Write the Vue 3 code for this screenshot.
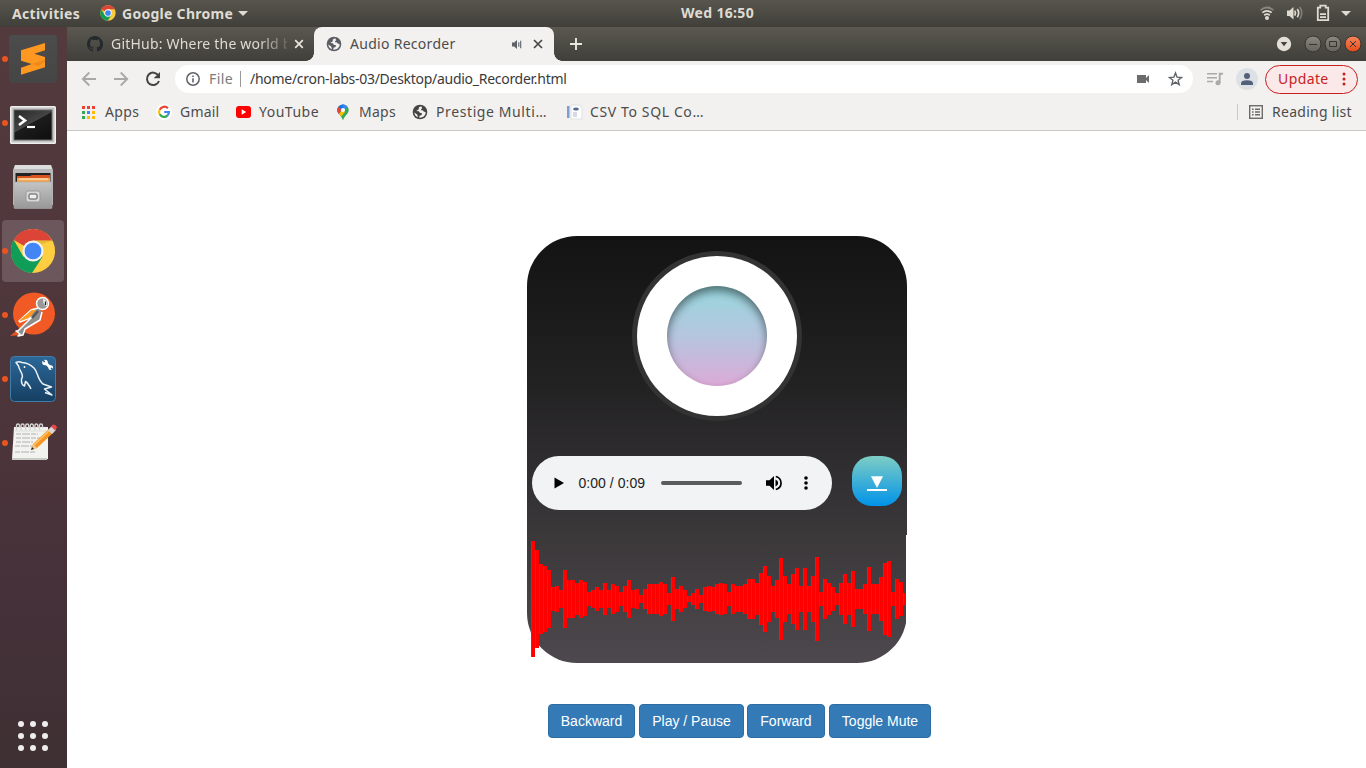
<script setup>
const tops = [33,60,102,108,120,171,168,180,120,150,150,159,150,156,186,180,171,180,159,180,162,168,186,168,150,180,177,195,177,162,162,162,156,162,189,141,177,168,180,198,189,177,195,171,168,171,162,159,162,186,162,168,168,162,147,147,159,129,108,138,168,150,84,138,162,132,114,168,114,168,138,81,186,147,159,171,189,159,132,159,123,177,177,162,111,162,162,141,99,93,186,147,156,189]
const bars = tops.map(t => ((207 - t) * 2) / 3)
const gridColors = ['#ea4335','#ea4335','#ea4335','#34a853','#4285f4','#fbbc05','#34a853','#fbbc05','#fbbc05']
const controls = [
  { label: 'Backward', w: 87 },
  { label: 'Play / Pause', w: 105 },
  { label: 'Forward', w: 78 },
  { label: 'Toggle Mute', w: 102 }
]
</script>

<template>
  <div class="desktop">
    <header class="topbar">
      <span class="activities">Activities</span>
      <svg class="tb-chrome" width="16" height="16" viewBox="0 0 48 48"><circle cx="24" cy="24" r="23" fill="#fbc93d"/><path d="M24 24 4 12.5A23 23 0 0 1 44 12.5H24Z" fill="#db4437"/><path d="M4 12.5A23 23 0 0 0 23 47L34 30 24 24 14 30Z" fill="#0f9d58"/><circle cx="24" cy="24" r="11" fill="#fff"/><circle cx="24" cy="24" r="8.5" fill="#4285f4"/></svg>
      <span class="appname">Google Chrome</span>
      <i class="caret"></i>
      <span class="clock">Wed 16:50</span>
      <div class="tray">
        <svg width="106" height="27" viewBox="0 0 106 27">
          <g fill="none" stroke="#dfdbd2" stroke-width="1.7">
            <path d="M.5 10.200q6.500-5.400 13 0" opacity=".4"/><path d="M2.300 12.700q4.700-3.700 9.400 0"/><path d="M4.200 15.200q2.800-2 5.600 0"/>
            <path d="M34.800 10.600q1.400 2.400 0 5M37.300 9q2.700 4 0 8.300"/><path d="M39.800 7q4 6 0 12.400" opacity=".35"/>
          </g>
          <circle cx="7" cy="18" r="2" fill="#dfdbd2"/>
          <path d="M27 10.500h2.500l4-3.500v12.500l-4-3.500H27z" fill="#dfdbd2"/>
          <path d="M57.800 7.700h2.500v-2h5.400v2h2.500v12.500H57.800zM60 14.200h6M60 17.200h6" fill="none" stroke="#dfdbd2" stroke-width="1.800"/>
          <path d="M81 11h10l-5 5z" fill="#dfdbd2"/>
        </svg>
      </div>
    </header>

    <div class="body">
      <aside class="dock">
        <div class="slot s1"><i class="dot"></i>
          <svg width="48" height="48" viewBox="0 0 48 48"><defs><linearGradient id="sb" x2="0" y2="1"><stop stop-color="#4c4c4c"/><stop offset="1" stop-color="#454545"/></linearGradient></defs><rect width="48" height="48" rx="3.500" fill="url(#sb)"/><path d="M12 15.300 36 8v7.200L25.300 18.800 36 22v10.300L12 39.700v-7L22.700 29 12 25.700z" fill="#ff9820"/><path d="m22.700 29 13.300-4.500v2l-6 4.500z" fill="#ef8a1a"/></svg>
        </div>
        <div class="slot s2"><i class="dot"></i>
          <svg width="46" height="38" viewBox="0 0 46 38"><defs><linearGradient id="tm" x2="0.700" y2="1"><stop stop-color="#282828"/><stop offset=".5" stop-color="#444"/><stop offset=".52" stop-color="#1c1c1c"/><stop offset="1" stop-color="#111"/></linearGradient></defs><rect width="46" height="38" rx="1.500" fill="#efefef"/><rect x="1.500" y="1.500" width="43" height="35" fill="#c4c4c4"/><rect x="4" y="4" width="38" height="30" fill="url(#tm)" stroke="#666"/><path d="m9 10 6 4.500-6 4.500" fill="none" stroke="#fff" stroke-width="2.600"/><path d="M17 21h8" stroke="#fff" stroke-width="2.200"/></svg>
        </div>
        <div class="slot s3">
          <svg width="42" height="44" viewBox="0 0 42 44"><defs><linearGradient id="fc" x2="0" y2="1"><stop stop-color="#c4c4c4"/><stop offset="1" stop-color="#989898"/></linearGradient></defs><path d="M3 0h36l2 5v35H1V5z" fill="#b9b9b9"/><path d="M3 0h36l1 4H2z" fill="#ddd"/><rect x="3.500" y="8" width="35" height="10" fill="#222"/><path d="M5 11h13l2-1h18v8H5z" fill="#d9541c"/><path d="M5 13h33v5H5z" fill="#f4a750"/><path d="M7 14h29" stroke="#fff1dc"/><rect x="2" y="17" width="38" height="26.500" rx="1" fill="url(#fc)" stroke="#aaa" stroke-width=".6"/><rect x="14" y="26" width="14" height="11" rx="2" fill="#d7d7d7" stroke="#9b9b9b"/><rect x="17" y="29" width="8" height="5" rx="1" fill="#eee" stroke="#555"/></svg>
        </div>
        <div class="slot s4"><i class="dot"></i>
          <svg width="46" height="46" viewBox="0 0 48 48"><circle cx="24" cy="24" r="23" fill="#ffcd40"/><path d="M24 24 4 12.500A23 23 0 0 1 44 13H24Z" fill="#db4437"/><path d="M4 12.500A23 23 0 0 0 23 47L34 30 24 24 14 30Z" fill="#0f9d58"/><path d="M24 13h20l-11 4z" fill="#c89a25" opacity=".4"/><circle cx="24" cy="24" r="11" fill="#f1f1f1"/><circle cx="24" cy="24" r="8.700" fill="#4285f4"/></svg>
        </div>
        <div class="slot s5"><i class="dot"></i>
          <svg width="48" height="48" viewBox="0 0 48 48"><circle cx="25" cy="22.500" r="21" fill="#f15a24"/><path d="M1 45 13 35l-1 9z" fill="#e95420"/><path d="M29 17 22 19 10 30l1 1 12-5-14 14-2 0 4 3-2 2 5-1 2-6 15-9 2-8" fill="#8e8e8e" stroke="#fff" stroke-width="1.500" stroke-linejoin="round"/><path d="m23 19-12 10 0 1 9-3 7-8" fill="#ff9a20"/><path d="m29 20-6 7" stroke="#555" stroke-width="2.500"/><circle cx="33.500" cy="12.500" r="6" fill="#999" stroke="#fff" stroke-width="1.500"/><path d="M34 8q5 1 4 7-4 0-4-7" fill="#eee"/><path d="M36.500 10.500v3.500" stroke="#222" stroke-width="1.300"/></svg>
        </div>
        <div class="slot s6"><i class="dot"></i>
          <svg width="46" height="46" viewBox="0 0 46 46"><defs><linearGradient id="my" x2="0" y2="1"><stop stop-color="#2c6899"/><stop offset="1" stop-color="#163f62"/></linearGradient></defs><rect x=".5" y=".5" width="45" height="45" rx="4" fill="url(#my)" stroke="#407da9"/><path d="M21 33Q18 27 15.500 25.500L14.500 30Q11 29 11.500 23C15 19 9 15 8.500 10L6 6.500Q9 5 12 6.500 19 7 24 12C28 16 27 23 33 28L41.500 31 34.500 33 42 39 35 36.500" fill="none" stroke="#e9f1f7" stroke-width="1.500" stroke-linejoin="round"/><circle cx="14.500" cy="11" r=".9" fill="#fff"/><path d="m34.500 6 6.500 6" stroke="#fff" stroke-width="3"/><circle cx="35" cy="6.500" r="2.800" fill="#fff"/><circle cx="40.700" cy="11.700" r="2.400" fill="#fff"/><path d="m32.500 3.500 2.200 2.500M43 14l-2-2" stroke="#2a6391" stroke-width="1.600"/></svg>
        </div>
        <div class="slot s7"><i class="dot"></i>
          <svg width="48" height="40" viewBox="0 0 48 40"><path d="M4 5h34v32H2z" fill="#f2f2ef"/><path d="M2 36h35v2H2z" fill="#c9c9c5"/><path d="M5 9h32" stroke="#ddd"/><path d="M6.500 8V3.500a1.500 1.500 0 0 1 3 0V6m1.600 2V3.500a1.500 1.500 0 0 1 3 0V6m1.600 2V3.500a1.500 1.500 0 0 1 3 0V6m1.600 2V3.500a1.500 1.500 0 0 1 3 0V6m1.600 2V3.500a1.500 1.500 0 0 1 3 0V6m1.600 2V3.500a1.500 1.500 0 0 1 3 0V6" fill="none" stroke="#d4d4d4" stroke-width="1.400"/><path d="M6 12h22M6 16h24M6 20h17M5 24h19M5 30h20" stroke="#a9a9a9" stroke-width=".9" stroke-dasharray="5 1 8 1"/><path d="m21 28 2-6L40 6l4 4-17 16z" fill="#f7971f"/><path d="m24 23 17-16" stroke="#ffc36d" stroke-width="1.500"/><path d="m38 8 4-4 4 4-4 4z" fill="#d8d8d8"/><path d="m41 4.500 2-2q3 0 4 3l-2 3z" fill="#e8474c"/><path d="m21 28 2-6 4 4z" fill="#efc794"/><path d="m21 28 1-3 2 2z" fill="#222"/></svg>
        </div>
        <div class="apps"><i v-for="n in 9" :key="n"></i></div>
      </aside>

      <section class="window">
        <div class="tabs">
          <div class="tab idle">
            <svg width="16" height="16" viewBox="0 0 16 16"><path fill="#24292e" d="M8 0C3.580 0 0 3.580 0 8c0 3.540 2.290 6.530 5.470 7.590.4.070.55-.17.55-.38v-1.490c-2.010.37-2.530-.49-2.690-.94-.09-.23-.48-.94-.82-1.130-.28-.15-.68-.52-.01-.53.63-.01 1.080.58 1.230.82.72 1.210 1.870.87 2.330.66.070-.52.280-.87.510-1.070-1.780-.2-3.640-.89-3.640-3.950 0-.87.310-1.590.82-2.150-.08-.2-.36-1.020.08-2.120 0 0 .67-.21 2.200.82a7.600 7.600 0 0 1 4 0c1.530-1.040 2.200-.82 2.200-.82.44 1.100.16 1.920.08 2.120.51.560.82 1.270.82 2.150 0 3.070-1.870 3.750-3.650 3.950.29.250.54.730.54 1.480v2.200c0 .21.150.46.550.38A8 8 0 0 0 8 0z"/></svg>
            <span class="tab-title t-github">GitHub: Where the world b</span>
            <svg class="close" width="10" height="10" viewBox="0 0 10 10"><path d="m1.200 1.200 7.600 7.600m0-7.600L1.200 8.800" stroke="#e8e6e0" stroke-width="1.700"/></svg>
          </div>
          <div class="tab active">
            <svg width="16" height="16" viewBox="0 0 16 16"><circle cx="8" cy="8" r="7.300" fill="#5a5d62"/><path d="M9.200 2.200 7 3.300 6.600 5.600 4.200 7 6.800 7.300 7.800 8.800 10 9.200 9.600 11 7.600 11.700 7.200 13.700C11 14 13.600 11.600 13.700 8.300L11.800 7.600 10.600 6.200 9 6.300 9.200 5 10.300 4.200zM2.300 8.500 5.200 10.400 6 13.200C3.800 12.500 2.400 10.700 2.300 8.500z" fill="#f2f1f0"/></svg>
            <span class="tab-title t-audio">Audio Recorder</span>
            <svg class="snd" width="11" height="11" viewBox="0 0 11 11"><path d="M0 3.500h2.200L5 1v9L2.200 7.500H0z" fill="#5f6368"/><path d="M6.800 3.200v4.600M8.700 1.700v7.600" stroke="#5f6368" stroke-width="1.100"/></svg>
            <svg class="close2" width="10" height="10" viewBox="0 0 10 10"><path d="m1 1 8 8m0-8L1 9" stroke="#474747" stroke-width="1.700"/></svg>
          </div>
          <svg class="plus" width="12" height="12" viewBox="0 0 12 12"><path d="M6 0v12M0 6h12" stroke="#e8e6e0" stroke-width="1.900"/></svg>
          <svg class="wm" width="92" height="34" viewBox="0 0 92 34">
            <defs><linearGradient id="wb" x2="0" y2="1"><stop stop-color="#8a8880"/><stop offset="1" stop-color="#64625b"/></linearGradient><linearGradient id="wc" x2="0" y2="1"><stop stop-color="#f5875f"/><stop offset="1" stop-color="#e34b17"/></linearGradient></defs>
            <circle cx="10" cy="17" r="7.200" fill="#e4e0d8"/><path d="M6.700 15h6.600L10 19.200z" fill="#45433e"/>
            <g stroke="#35342f"><circle cx="39" cy="17" r="8" fill="url(#wb)"/><circle cx="59" cy="17" r="8" fill="url(#wb)"/><circle cx="79" cy="17" r="8" fill="url(#wc)"/><path d="M35 17.500h8M55.500 14.500h7v5h-7zM76 14l6 6m0-6-6 6" fill="none"/></g>
          </svg>
        </div>

        <div class="toolbar">
          <svg class="nav" width="78" height="36" viewBox="0 0 78 36"><path d="M29 18H16M22.300 11.500 15.800 18l6.500 6.500M47 18h13M53.700 11.500l6.500 6.500-6.500 6.500" fill="none" stroke="#a9a8a7" stroke-width="1.800"/></svg>
          <svg class="reload" width="16" height="16" viewBox="0 0 16 16"><path d="M13.300 4.300A6.200 6.200 0 1 0 14 10" fill="none" stroke="#444" stroke-width="2"/><path d="M15 1v6.300H8.700z" fill="#444"/></svg>
          <div class="omnibox">
            <svg width="14" height="14" viewBox="0 0 14 14"><circle cx="7" cy="7" r="6.200" fill="none" stroke="#5f6368" stroke-width="1.500"/><path d="M7 6.200v4.300M7 3.500V5" stroke="#5f6368" stroke-width="1.600"/></svg>
            <span class="file">File</span><i class="sep"></i><span class="url">/home/cron-labs-03/Desktop/audio_Recorder.html</span>
            <svg class="cam" width="13" height="8" viewBox="0 0 13 8"><path d="M0 0h9v3l3-3v8L9 5v3H0z" fill="#6c6c6c"/></svg>
            <svg class="star" width="16" height="16" viewBox="0 0 16 16"><path d="m8 2 1.600 4.200 4.400.3-3.400 2.800 1.100 4.300L8 11.200l-3.700 2.400 1.100-4.300L2 6.500l4.400-.3z" fill="none" stroke="#5f6368" stroke-width="1.400"/></svg>
          </div>
          <svg class="queue" width="17" height="14" viewBox="0 0 17 14"><path d="M0 1.700h10M0 5.700h10M0 9.500h6" stroke="#aaa" stroke-width="1.500"/><path d="M16 1.700h-3.300v9" fill="none" stroke="#aaa" stroke-width="1.900"/><circle cx="11" cy="10.700" r="2.500" fill="#aaa"/></svg>
          <svg class="avatar" width="22" height="22" viewBox="0 0 22 22"><circle cx="11" cy="11" r="11" fill="#dde1e6"/><circle cx="11" cy="8" r="3" fill="#53607a"/><path d="M5 17v-1.500Q5 12.300 11 12.300t6 3.200V17z" fill="#53607a"/></svg>
          <div class="update"><span>Update</span><svg width="4" height="14" viewBox="0 0 4 14"><g fill="#c5221f"><circle cx="2" cy="2" r="1.500"/><circle cx="2" cy="7" r="1.500"/><circle cx="2" cy="12" r="1.500"/></g></svg></div>
        </div>

        <nav class="bookmarks">
          <div class="grid9"><i v-for="(c, i) in gridColors" :key="i" :style="{ background: c }"></i></div>
          <span class="bm b-apps">Apps</span>
          <svg class="g" width="16" height="16" viewBox="0 0 16 16"><circle cx="8" cy="8" r="8" fill="#fff"/><g fill="none" stroke-width="2.200"><path d="M11.900 4.300A5 5 0 0 0 3.700 5.700" stroke="#ea4335"/><path d="M3.700 5.500a5 5 0 0 0 0 5" stroke="#fbbc05"/><path d="M3.700 10.300a5 5 0 0 0 7.700 1.300" stroke="#34a853"/><path d="M11.300 11.700C12.500 10.600 13 9.500 12.900 8H8.200" stroke="#4285f4"/></g></svg>
          <span class="bm b-gmail">Gmail</span>
          <svg class="yt" width="15" height="12" viewBox="0 0 15 12"><rect width="15" height="12" rx="3" fill="#f00"/><path d="M5.700 3.300 10.200 6l-4.500 2.700z" fill="#fff"/></svg>
          <span class="bm b-yt">YouTube</span>
          <svg class="pin" width="12" height="17" viewBox="0 0 12 17"><defs><clipPath id="pc"><path d="M6 .5A5.700 5.700 0 0 0 .3 6c0 4 4.200 5.200 5.700 10.500C7.500 11.200 11.700 10 11.700 6A5.700 5.700 0 0 0 6 .5z"/></clipPath></defs><g clip-path="url(#pc)"><path d="M0 0h12v17H0z" fill="#34a853"/><path d="M0 12 10 0H0z" fill="#1a73e8"/><path d="m0 2 5 4-5 5z" fill="#ea4335"/><path d="M1 11 5 6l3 2-5 6z" fill="#fbbc04"/><path d="M5 0h8L7 6z" fill="#4285f4"/></g><circle cx="6" cy="6" r="2.100" fill="#fff"/></svg>
          <span class="bm b-maps">Maps</span>
          <svg class="globe" width="16" height="16" viewBox="0 0 16 16"><circle cx="8" cy="8" r="7.300" fill="#444"/><path d="M9.200 2.200 7 3.300 6.600 5.600 4.200 7 6.800 7.300 7.800 8.800 10 9.200 9.600 11 7.600 11.700 7.200 13.700C11 14 13.600 11.600 13.700 8.300L11.800 7.600 10.600 6.200 9 6.300 9.200 5 10.300 4.200zM2.300 8.500 5.200 10.400 6 13.200C3.800 12.500 2.400 10.700 2.300 8.500z" fill="#f2f1f0"/></svg>
          <span class="bm b-prest">Prestige Multi…</span>
          <svg class="csv" width="16" height="16" viewBox="0 0 16 16"><rect x="0" y="2" width="2.500" height="12" fill="#7e9dd0"/><path d="M4 1h9l2 3v11H4z" fill="#fdfdfd" stroke="#d5d9e0" stroke-width=".7"/><ellipse cx="9" cy="5" rx="2.900" ry="1.600" fill="#536a90"/><path d="M6 8h4v5H6z" fill="#d5dae3"/></svg>
          <span class="bm b-csv">CSV To SQL Co…</span>
          <i class="bsep"></i>
          <svg class="rl" width="14" height="14" viewBox="0 0 14 14"><rect x=".7" y=".7" width="12.600" height="12.600" fill="none" stroke="#6b6b6b" stroke-width="1.400"/><path d="M3 4.200h1.600M6 4.200h5M3 7h1.600M6 7h5M3 9.800h1.600M6 9.800h5" stroke="#6b6b6b" stroke-width="1.400"/></svg>
          <span class="bm b-read">Reading list</span>
        </nav>

        <main class="page">
          <div class="card">
            <div class="ring"><div class="lens"></div></div>
            <div class="row">
              <div class="player">
                <svg width="10" height="12" viewBox="0 0 10 12"><path d="M.5.500v11L10 6z" fill="#000"/></svg>
                <span class="time">0:00 / 0:09</span>
                <i class="track"></i>
                <svg class="vol" width="17" height="16" viewBox="0 0 17 16"><path d="M0 5.300h3.500L8 1v14l-4.500-4.300H0z"/><path d="M9.500 4.500q2.700 1.200 2.700 3.500T9.500 11.500z"/><path d="M9.800 1.500c7 2 7 11 0 13" fill="none" stroke="#000" stroke-width="1.700"/></svg>
                <svg class="dots" width="4" height="14" viewBox="0 0 4 14"><circle cx="2" cy="2" r="1.800"/><circle cx="2" cy="7" r="1.800"/><circle cx="2" cy="12" r="1.800"/></svg>
              </div>
              <div class="download"><svg width="20" height="16" viewBox="0 0 20 16"><path d="M4 1.200h12L10 13z" fill="#fff"/><path d="M0 15h20" stroke="#fff" stroke-width="2"/></svg></div>
            </div>
            <div class="wave"><i v-for="(h, i) in bars" :key="i" :style="{ height: h + 'px' }"></i></div>
          </div>
          <div class="controls"><button v-for="c in controls" :key="c.label" :style="{ width: c.w + 'px' }">{{ c.label }}</button></div>
        </main>
      </section>
    </div>
  </div>
</template>

<style>
body { margin: 0; overflow: hidden; }
</style>

<style scoped>
* { box-sizing: border-box; }
svg, i { display: block; flex: none; }
span { white-space: nowrap; flex: none; }
.desktop { width: 1366px; height: 768px; overflow: hidden; font-family: "Noto Sans", sans-serif; display: flex; flex-direction: column; background: #fff; }
.topbar { height: 27px; flex: none; display: flex; align-items: center; position: relative; background: linear-gradient(#57554d, #403f3a); color: #dfdbd2; font-size: 14px; font-weight: 700; line-height: 26px; padding-left: 12px; }
.activities { width: 88px; letter-spacing: .3px; }
.tb-chrome { margin-top: -1px; }
.appname { margin-left: 6px; width: 113px; letter-spacing: .28px; }
.caret { margin-left: 3px; border: 5px solid transparent; border-top-color: #dfdbd2; border-bottom: 0; }
.clock { margin-left: 433px; letter-spacing: .33px; line-height: 24px; margin-top: -1px; }
.tray { position: absolute; left: 1260px; top: 0; }
.body { display: flex; height: 741px; }
.dock { width: 67px; flex: none; background: linear-gradient(#533a3d, #4c353a 55%, #46313a 75%, #3e3033); position: relative; display: flex; flex-direction: column; align-items: center; padding-top: 1px; }
.slot { width: 62px; height: 62px; margin-bottom: 2px; margin-right: 1px; position: relative; display: flex; align-items: center; justify-content: center; border-radius: 4px; flex: none; }
.s2 { padding-top: 4px; }
.s4 { background: #6b575c; }
.dot { position: absolute; left: 0; top: 28px; width: 6px; height: 6px; border-radius: 50%; background: #e95420; }
.s7 svg { margin: -3px 0 0 2px; }
.apps { position: absolute; left: 18px; top: 694px; display: grid; grid-template-columns: repeat(3, 6px); gap: 6px; }
.apps i { width: 6px; height: 6px; border-radius: 50%; background: #eee; }
.window { width: 1299px; display: flex; flex-direction: column; }
.tabs { height: 34px; flex: none; display: flex; align-items: center; background: linear-gradient(#5a5850, #403f3a); }
.tab { height: 34px; display: flex; align-items: center; position: relative; }
.idle { width: 247px; padding-left: 20px; }
.tab-title { font-size: 14px; line-height: 34px; margin-left: 8px; letter-spacing: .29px; }
.t-github { width: 176px; color: #dfdbd2; letter-spacing: .2px; -webkit-mask-image: linear-gradient(90deg, #000 148px, transparent 182px); mask-image: linear-gradient(90deg, #000 148px, transparent 182px); }
.close { margin-left: 7px; }
.active { width: 240px; background: #f2f1f0; border-radius: 8px 8px 0 0; padding-left: 12px; color: #4d4c4b; }
.active::before, .active::after { content: ""; position: absolute; bottom: 0; width: 8px; height: 8px; }
.active::before { left: -8px; background: radial-gradient(circle at 0 0, transparent 7.500px, #f2f1f0 8px); }
.active::after { right: -8px; background: radial-gradient(circle at 100% 0, transparent 7.500px, #f2f1f0 8px); }
.t-audio { width: 154px; }
.snd { margin-left: 8px; }
.close2 { margin-left: 10px; }
.plus { margin-left: 16px; }
.wm { margin-left: 692px; }
.toolbar { height: 36px; flex: none; display: flex; align-items: center; background: #f2f1f0; }
.nav { width: 78px; height: 36px; }
.omnibox { margin-left: 14px; width: 1018px; height: 28px; flex: none; border-radius: 14px; background: #fff; display: flex; align-items: center; padding-left: 11px; font-size: 14px; line-height: 28px; }
.file { margin-left: 9px; width: 24px; color: #7b7b7b; letter-spacing: .4px; }
.sep { width: 1px; height: 16px; background: #999; margin-left: 7px; }
.url { width: 318px; margin-left: 9px; color: #3a3a3a; letter-spacing: -.28px; }
.cam { margin-left: 569px; }
.star { margin-left: 17px; width: 17px; }
.queue { margin-left: 14px; }
.avatar { margin-left: 12px; }
.update { margin-left: 7px; width: 93px; height: 29px; flex: none; border: 1px solid #c5221f; border-radius: 15px; background: #fae9e8; color: #c5221f; display: flex; align-items: center; padding-left: 12px; font-size: 14px; line-height: 26px; }
.update span { width: 64px; letter-spacing: .4px; }
.bookmarks { height: 34px; flex: none; display: flex; align-items: center; background: #f2f1f0; border-bottom: 1px solid #c9c8c7; color: #4d4c4b; padding: 0 0 3px 15px; }
.bm { font-size: 14px; line-height: 26px; }
.grid9 { display: grid; grid-template-columns: repeat(3, 3px); gap: 2px; width: 13px; }
.grid9 i { width: 3px; height: 3px; }
.b-apps { margin-left: 10px; width: 35px; letter-spacing: .4px; }
.g { margin-left: 16px; }
.b-gmail { margin-left: 8px; width: 39px; letter-spacing: .2px; }
.yt { margin-left: 17px; }
.b-yt { margin-left: 8px; width: 60px; letter-spacing: .5px; }
.pin { margin-left: 18px; }
.b-maps { margin-left: 10px; width: 37px; letter-spacing: .25px; }
.globe { margin-left: 16px; }
.b-prest { margin-left: 8px; width: 111px; letter-spacing: .6px; }
.csv { margin-left: 20px; }
.b-csv { margin-left: 7px; width: 114px; letter-spacing: .62px; }
.bsep { margin-left: 533px; width: 1px; height: 16px; background: #cbcac9; }
.rl { margin-left: 11px; }
.b-read { margin-left: 9px; letter-spacing: .28px; }
.page { height: 637px; position: relative; background: #fff; padding: 105px 0 0 460px; }
.card { width: 380px; height: 427px; border-radius: 50px; background: linear-gradient(#131313, #232223 35%, #302e31 55%, #3b383a 70%, #4d484d); position: relative; padding-top: 20px; }
.card::after { content: ""; position: absolute; right: 0; top: 299px; width: 1px; height: 128px; background: #fff; }
.ring { width: 160px; height: 160px; margin: 0 auto; border-radius: 50%; background: #fff; box-shadow: 0 0 0 5px #333; padding: 30px; }
.lens { width: 100px; height: 100px; border-radius: 50%; background: linear-gradient(#98d8de, #b5c5de 50%, #dcaad7); box-shadow: inset 0 5px 8px rgba(0, 0, 0, .48); }
.row { display: flex; margin: 40px 5px 0; justify-content: space-between; }
.player { width: 300px; height: 54px; border-radius: 27px; background: #f1f3f4; display: flex; align-items: center; padding-left: 22px; }
.time { font-family: "Liberation Sans", sans-serif; font-size: 14px; color: #222; margin-left: 14.500px; width: 66.500px; letter-spacing: .04px; }
.track { width: 81px; height: 4px; border-radius: 2px; background: #5b5b5b; margin-left: 16px; }
.vol { margin-left: 24px; }
.dots { margin-left: 21px; }
.download { width: 50px; height: 50px; border-radius: 20px; background: linear-gradient(#7ecdc4, #0093e9); display: flex; justify-content: center; padding: 19px 1px 0 0; }
.wave { height: 116px; margin: 31px 1px 0 4px; display: flex; align-items: center; overflow: hidden; }
.wave i { width: 4px; background: linear-gradient(90deg, #d02325 1px, #f00 1px); }
.controls { display: flex; gap: 4px; margin: 41px 0 0 21px; }
.controls button { height: 34px; padding: 0; border: 1px solid #2e6da4; border-radius: 4px; background: #337ab7; color: #fff; font: 14px "Liberation Sans", sans-serif; }
.controls button:nth-child(3) { margin-left: -1px; }
</style>
